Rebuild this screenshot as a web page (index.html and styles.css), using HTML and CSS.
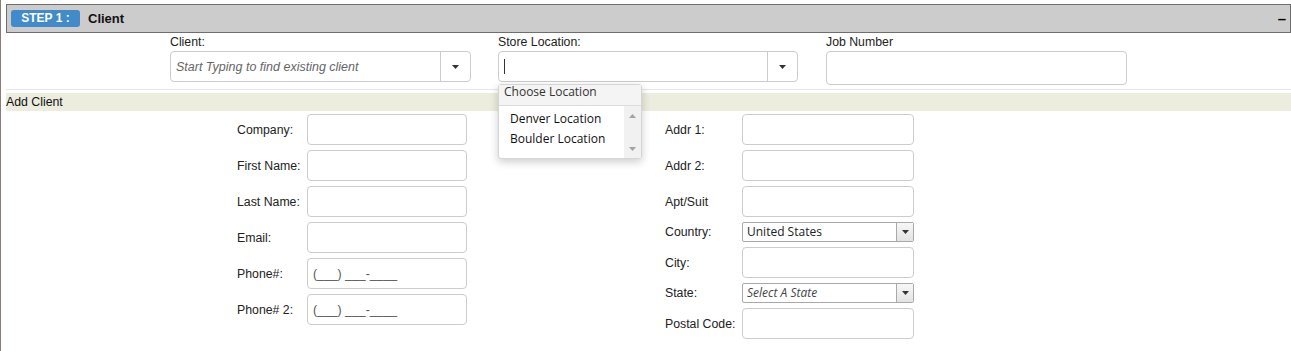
FILE: index.html
```html
<!DOCTYPE html>
<html>
<head>
<meta charset="utf-8">
<link rel="stylesheet" href="styles.css">
</head>
<body>
<div class="page">
  <div class="step-head">
    <span class="badge">STEP 1 :</span>
    <span class="step-title">Client</span>
    <span class="collapse">–</span>
  </div>

  <div class="top-fields">
    <div class="field f-client">
      <span class="field-label">Client:</span>
      <div class="combo">
        <span class="combo-text placeholder">Start Typing to find existing client</span>
        <span class="combo-btn"><svg width="7" height="4" viewBox="0 0 7 4"><path d="M0 0H7L3.5 4Z" fill="#333"/></svg></span>
      </div>
    </div>
    <div class="field f-store">
      <span class="field-label">Store Location:</span>
      <div class="combo">
        <span class="combo-text"><span class="caret"></span></span>
        <span class="combo-btn"><svg width="7" height="4" viewBox="0 0 7 4"><path d="M0 0H7L3.5 4Z" fill="#333"/></svg></span>
      </div>
      <div class="popup">
        <div class="popup-head">Choose Location</div>
        <div class="popup-body">
          <ul class="popup-list">
            <li>Denver Location</li>
            <li>Boulder Location</li>
          </ul>
          <div class="scrollbar">
            <svg width="7" height="4" viewBox="0 0 7 4"><path d="M0 4H7L3.5 0Z" fill="#a3a3a3"/></svg>
            <svg width="7" height="4" viewBox="0 0 7 4"><path d="M0 0H7L3.5 4Z" fill="#a3a3a3"/></svg>
          </div>
        </div>
      </div>
    </div>
    <div class="field f-job">
      <span class="field-label">Job Number</span>
      <div class="text-input tall"></div>
    </div>
  </div>

  <div class="sep"></div>
  <div class="band">Add Client</div>

  <div class="form-area">
    <div class="group group-left">
      <span class="row-label">Company:</span><div class="text-input"></div>
      <span class="row-label">First Name:</span><div class="text-input"></div>
      <span class="row-label">Last Name:</span><div class="text-input"></div>
      <span class="row-label">Email:</span><div class="text-input"></div>
      <span class="row-label">Phone#:</span><div class="text-input mask">(___) ___-____</div>
      <span class="row-label">Phone# 2:</span><div class="text-input mask">(___) ___-____</div>
    </div>
    <div class="group group-right">
      <span class="row-label">Addr 1:</span><div class="text-input"></div>
      <span class="row-label">Addr 2:</span><div class="text-input"></div>
      <span class="row-label">Apt/Suit</span><div class="text-input"></div>
      <span class="row-label">Country:</span>
      <div class="select">
        <span class="select-text">United States</span>
        <span class="select-btn"><svg width="7" height="4" viewBox="0 0 7 4"><path d="M0 0H7L3.5 4Z" fill="#333"/></svg></span>
      </div>
      <span class="row-label">City:</span><div class="text-input"></div>
      <span class="row-label">State:</span>
      <div class="select">
        <span class="select-text select-ph">Select A State</span>
        <span class="select-btn"><svg width="7" height="4" viewBox="0 0 7 4"><path d="M0 0H7L3.5 4Z" fill="#333"/></svg></span>
      </div>
      <span class="row-label">Postal Code:</span><div class="text-input"></div>
    </div>
  </div>
</div>
</body>
</html>
```

FILE: styles.css
```css
* { box-sizing: border-box; }
html, body { margin: 0; padding: 0; }
body {
  font-family: "Liberation Sans", Arial, sans-serif;
  font-size: 12.3px;
  color: #222;
  background: #fff;
}
.page {
  border-left: 1px solid #8a7b7b;
  min-height: 351px;
  padding: 4px 0 0 5px;
}
.step-head {
  height: 29px;
  border: 1px solid #6e6e6e;
  background: #cccccc;
  display: flex;
  align-items: center;
  padding: 0 4px;
}
.badge {
  width: 69px;
  height: 17px;
  background: #428bca;
  border-radius: 3px;
  color: #fff;
  font-weight: bold;
  font-size: 12px;
  line-height: 17px;
  text-align: center;
}
.step-title {
  margin-left: 8px;
  font-weight: bold;
  font-size: 13px;
  color: #111;
}
.collapse {
  margin-left: auto;
  font-weight: bold;
  font-size: 15px;
  line-height: 15px;
  color: #000;
}
.top-fields {
  display: flex;
  padding: 2px 0 0 164px;
}
.field { position: relative; }
.f-client { width: 301px; }
.f-store { width: 300px; margin-left: 27px; }
.f-job { width: 301px; margin-left: 28px; }
.field-label {
  display: block;
  line-height: 14px;
  margin-bottom: 2px;
}
.combo {
  display: flex;
  height: 31px;
  border: 1px solid #ccc;
  border-radius: 4px;
}
.combo-text {
  flex: 1;
  display: flex;
  align-items: center;
  padding-left: 5px;
}
.placeholder { font-style: italic; color: #666; font-size: 12.5px; }
.caret { width: 1px; height: 15px; background: #333; }
.combo-btn {
  width: 30px;
  border-left: 1px solid #ccc;
  display: flex;
  align-items: center;
  justify-content: center;
}
.text-input {
  height: 31px;
  border: 1px solid #ccc;
  border-radius: 4px;
  display: flex;
  align-items: center;
  padding-left: 5px;
}
.tall { height: 34px; }
.mask { color: #555; }
.sep {
  margin-top: 4px;
  height: 1px;
  background: #e6e6e6;
}
.band {
  margin-top: 3px;
  height: 18px;
  line-height: 18px;
  background: #ecedde;
  color: #111;
}
.form-area {
  display: flex;
  align-items: flex-start;
  padding: 3px 0 0 231px;
}
.group {
  display: grid;
  row-gap: 5px;
  align-items: center;
  align-content: start;
}
.group-left { grid-template-columns: 70px 160px; }
.group-right { grid-template-columns: 77px 172px; margin-left: 198px; }
.row-label { line-height: 14px; }
.select {
  height: 20px;
  border: 1px solid #a9a9a9;
  border-radius: 2px;
  display: flex;
  font-family: "Open Sans", sans-serif;
  font-size: 12px;
  color: #222;
}
.select-text {
  flex: 1;
  padding-left: 4px;
  line-height: 18px;
}
.select-ph { font-style: italic; color: #444; }
.select-btn {
  width: 17px;
  border-left: 1px solid #a9a9a9;
  background: linear-gradient(#f7f7f7, #e3e3e3);
  display: flex;
  align-items: center;
  justify-content: center;
}
.popup {
  position: absolute;
  top: 49px;
  left: 0;
  width: 144px;
  border: 1px solid #d5d5d5;
  border-radius: 3px;
  background: #fff;
  box-shadow: 0 3px 8px rgba(0, 0, 0, 0.2);
  font-family: "Open Sans", sans-serif;
  font-size: 12px;
  color: #333;
  z-index: 5;
}
.popup-head {
  height: 21px;
  background: #f4f4f4;
  line-height: 14px;
  padding: 0 5px;
  border-bottom: 1px solid #ddd;
  color: #333;
}
.popup-body {
  display: flex;
  height: 52px;
}
.popup-list {
  flex: 1;
  list-style: none;
  margin: 0;
  padding: 3px 0 0 11px;
}
.popup-list li { line-height: 20px; color: #111; }
.scrollbar {
  width: 17px;
  background: #f1f1f1;
  display: flex;
  flex-direction: column;
  align-items: center;
  justify-content: space-between;
  padding: 8px 0 7px;
}
```
